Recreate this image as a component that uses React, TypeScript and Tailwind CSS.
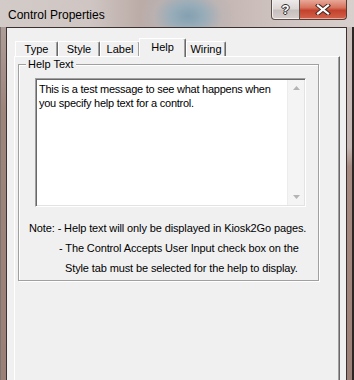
import React from 'react';

const tabs = [
  { name: 'Type', w: 'w-[43px]' },
  { name: 'Style', w: 'w-[42px]' },
  { name: 'Label', w: 'w-[40px]' },
  { name: 'Help', w: 'w-[47px]', active: true },
  { name: 'Wiring', w: 'w-[40px]' },
];

const ui = { fontFamily: '"Liberation Sans", Arial, sans-serif' };

function CloseGlyph() {
  return (
    <svg width="16" height="11" viewBox="0 0 16 11">
      <path d="M3 1.5 L13 9.5 M13 1.5 L3 9.5" stroke="#4a2a24" strokeWidth="4.2" strokeLinecap="square" />
      <path d="M3 1.5 L13 9.5 M13 1.5 L3 9.5" stroke="#ffffff" strokeWidth="2.2" strokeLinecap="square" />
    </svg>
  );
}

export default function App() {
  return (
    <div
      className="w-[354px] h-[380px] overflow-hidden flex flex-col bg-[radial-gradient(ellipse_48px_34px_at_188px_16px,#84a0b1_0,#98adb9_35%,rgba(185,180,182,0.6)_70%,transparent_100%),linear-gradient(to_right,#d3cbc8_0,#cfc6c3_90px,#bcaca7_140px,#b8acaa_170px,#c6b8b4_230px,#cdc1be_270px,#d8d0cd_354px)]"
      style={ui}
    >
      {/* Title bar */}
      <div className="h-[27px] flex items-start shrink-0">
        <div className="pl-[8px] pt-[7px] text-[12px] leading-[16px] text-black">Control Properties</div>
        <div className="flex-1" />
        <div className="flex mr-[7px]">
          <div className="w-[29px] h-[20px] border border-t-0 border-[#5b4f4c] rounded-bl-[4px] bg-[linear-gradient(to_bottom,#eeeae9_0,#dcd6d5_45%,#c7bfbd_55%,#d6cfcd_100%)] shadow-[inset_0_-1px_0_#f4f0ef,inset_1px_0_0_#f4f0ef] flex items-center justify-center">
            <span className="text-[13px] font-bold leading-none text-white [text-shadow:0_0_1px_#3a302e,0_0_1px_#3a302e,1px_0_0_#3a302e,-1px_0_0_#3a302e,0_1px_0_#3a302e,0_-1px_0_#3a302e]">?</span>
          </div>
          <div className="w-[47px] h-[20px] border border-l-0 border-t-0 border-[#5b3a33] rounded-br-[4px] bg-[linear-gradient(to_bottom,#e8a898_0,#d7735e_40%,#c4422c_55%,#d1634c_100%)] shadow-[inset_0_-1px_0_#eaa99a] flex items-center justify-center">
            <CloseGlyph />
          </div>
        </div>
      </div>

      <div className="flex flex-1">
        {/* left frame */}
        <div className="w-[6px] border-l border-[#7d7370] bg-[linear-gradient(to_bottom,#ad9d98_0,#9e857c_80px,#9a8077_100%)]" />

        {/* client area */}
        <div className="w-[341px] border border-b-0 border-[#3b3230] bg-[#f0f0f0] pl-[7px] pr-[6px] pt-[10px] flex flex-col">
          {/* tabs */}
          <div className="flex items-end h-[18px] pl-[1px] text-[11px] text-black">
            {tabs.map((t) =>
              t.active ? (
                <div
                  key={t.name}
                  className={`${t.w} h-[19px] -mb-[1px] -ml-[1px] relative z-10 bg-[#f0f0f0] border-l border-t border-white border-r border-r-[#696969] shadow-[inset_-1px_0_0_#a0a0a0] rounded-tr-[2px] flex justify-center pt-[1px] leading-[14px]`}
                >
                  {t.name}
                </div>
              ) : (
                <div
                  key={t.name}
                  className={`${t.w} h-[15px] bg-[#f0f0f0] border-l border-t border-white border-r border-r-[#696969] shadow-[inset_-1px_0_0_#a0a0a0] rounded-tr-[2px] flex justify-center leading-[15px]`}
                >
                  {t.name}
                </div>
              )
            )}
          </div>

          {/* tab panel */}
          <div className="flex-1 border-l border-t border-white border-r border-r-[#696969] shadow-[inset_-1px_0_0_#a0a0a0] pl-[3px] pt-[7px]">
            <div className="relative w-[301px] h-[217px] border border-[#a0a0a0] shadow-[inset_1px_1px_0_#ffffff,1px_1px_0_#ffffff] pl-[16px] pt-[13px]">
              <div className="absolute -top-[7px] left-[7px] px-[2px] bg-[#f0f0f0] text-[11px] leading-[13px] text-black">
                Help Text
              </div>

              {/* text box */}
              <div className="w-[271px] h-[129px] border border-t-[#a0a0a0] border-l-[#a0a0a0] border-r-white border-b-white shadow-[inset_1px_1px_0_#696969,inset_-1px_-1px_0_#e3e3e3] bg-white p-[1px] flex">
                <div className="flex-1 pl-[2px] pt-[2px] text-[11px] leading-[14px] tracking-[-0.25px] text-black">
                  This is a test message to see what happens when
                  <br />
                  you specify help text for a control.
                </div>
                <div className="w-[17px] bg-[#f4f4f4] border-l border-[#ececec] flex flex-col items-center justify-between py-[6px]">
                  <svg width="7" height="4" viewBox="0 0 7 4">
                    <path d="M0 4 L3.5 0 L7 4 Z" fill="#b4b4b4" />
                  </svg>
                  <svg width="7" height="4" viewBox="0 0 7 4">
                    <path d="M0 0 L3.5 4 L7 0 Z" fill="#b4b4b4" />
                  </svg>
                </div>
              </div>

              {/* note */}
              <div className="mt-[11px] -ml-[6px] text-[11px] leading-[20px] tracking-[-0.12px] text-black">
                <div>Note: - Help text will only be displayed in Kiosk2Go pages.</div>
                <div className="pl-[30px]">- The Control Accepts User Input check box on the</div>
                <div className="pl-[36px]">Style tab must be selected for the help to display.</div>
              </div>
            </div>
          </div>
        </div>

        {/* right frame */}
        <div className="w-[7px] border-r-2 border-[#2c2523] bg-[linear-gradient(to_bottom,#cbbfbb_0,#c3b6b2_120px,#a68b82_140px,#9c8178_100%)]" />
      </div>
    </div>
  );
}
